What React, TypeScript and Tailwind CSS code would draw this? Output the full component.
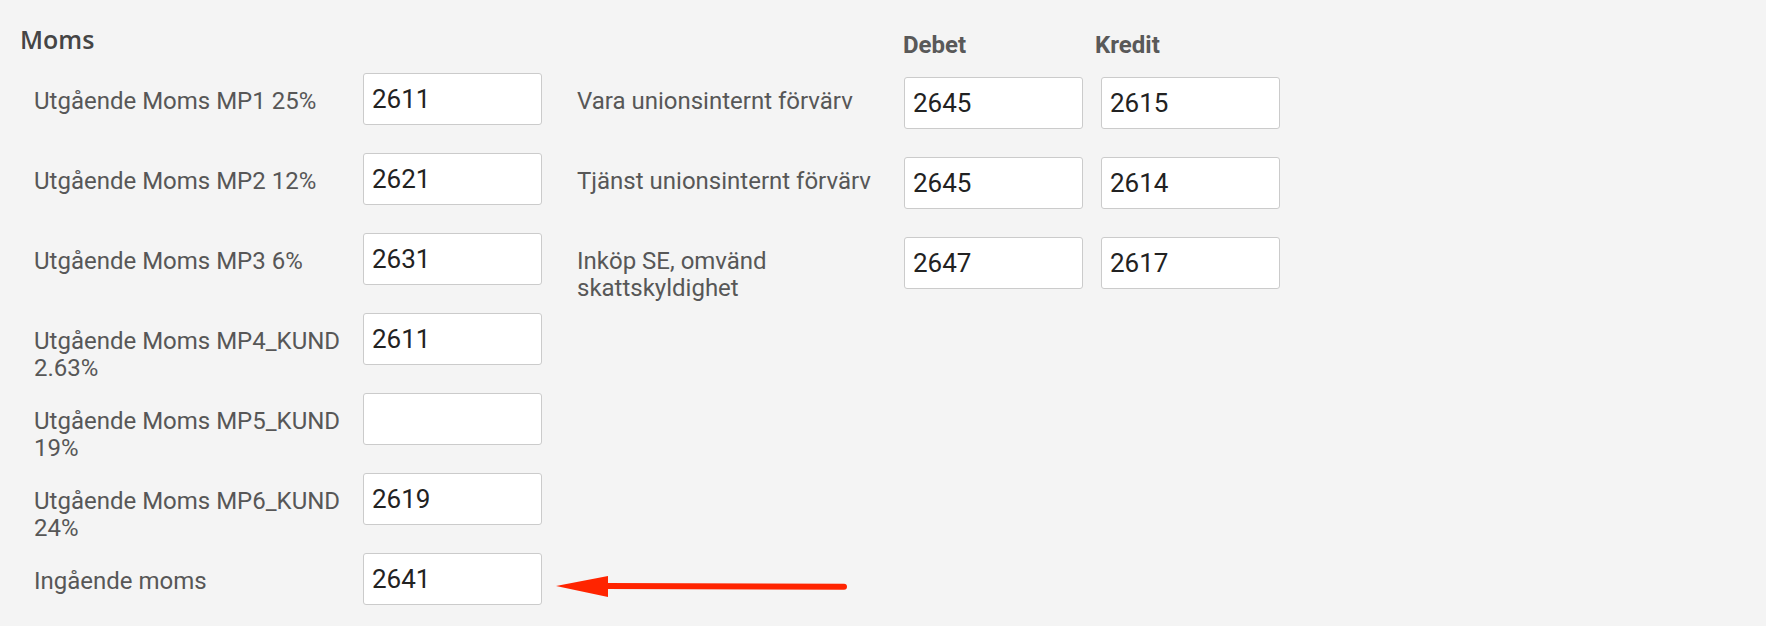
import React from "react";

const leftRows: { label: string; value: string }[] = [
  { label: "Utgående Moms MP1 25%", value: "2611" },
  { label: "Utgående Moms MP2 12%", value: "2621" },
  { label: "Utgående Moms MP3 6%", value: "2631" },
  { label: "Utgående Moms MP4_KUND 2.63%", value: "2611" },
  { label: "Utgående Moms MP5_KUND 19%", value: "" },
  { label: "Utgående Moms MP6_KUND 24%", value: "2619" },
  { label: "Ingående moms", value: "2641" },
];

const rightRows: { label: string; debet: string; kredit: string }[] = [
  { label: "Vara unionsinternt förvärv", debet: "2645", kredit: "2615" },
  { label: "Tjänst unionsinternt förvärv", debet: "2645", kredit: "2614" },
  { label: "Inköp SE, omvänd skattskyldighet", debet: "2647", kredit: "2617" },
];

function Field({ value }: { value: string }) {
  return (
    <input
      type="text"
      defaultValue={value}
      className="w-[179px] h-[52px] shrink-0 rounded-[3px] border border-[#cbcbcb] bg-white pl-[8px] text-[26px] text-[#222222] outline-none"
    />
  );
}

export default function App() {
  return (
    <div
      className="relative w-[1766px] h-[626px] overflow-hidden bg-[#f4f4f4] flex pl-[20px]"
      style={{ fontFamily: "Roboto, 'Liberation Sans', sans-serif" }}
    >
      {/* Left column */}
      <div className="flex flex-col pt-[23px]">
        <h2
          className="text-[25px] leading-[32px] font-semibold text-[#454545]"
          style={{ fontFamily: "'Open Sans', 'Noto Sans', sans-serif" }}
        >
          Moms
        </h2>
        <div className="mt-[18px] ml-[14px] flex flex-col gap-[28px]">
          {leftRows.map((r, i) => (
            <div key={i} className="flex items-start gap-[12px] h-[52px]">
              <div className="w-[317px] pt-[15px] text-[24px] leading-[27px] text-[#575757]">
                {r.label}
              </div>
              <Field value={r.value} />
            </div>
          ))}
        </div>
      </div>

      {/* Right column */}
      <div className="ml-[35px] flex flex-col pt-[32px]">
        <div className="flex h-[27px] text-[24px] leading-[27px] font-bold text-[#595959]">
          <div className="w-[326px]" />
          <div className="w-[192px]">Debet</div>
          <div>Kredit</div>
        </div>
        <div className="mt-[18px] flex flex-col gap-[28px]">
          {rightRows.map((r, i) => (
            <div key={i} className="flex items-start h-[52px]">
              <div className="w-[310px] mr-[17px] pt-[11px] text-[24px] leading-[27px] text-[#575757]">
                {r.label}
              </div>
              <div className="flex gap-[18px]">
                <Field value={r.debet} />
                <Field value={r.kredit} />
              </div>
            </div>
          ))}
        </div>
      </div>

      {/* Annotation arrow */}
      <svg
        className="absolute left-[550px] top-[570px]"
        width="300"
        height="34"
        viewBox="0 0 300 34"
      >
        <line x1="56" y1="16" x2="294" y2="16.8" stroke="#ff2400" strokeWidth="6" strokeLinecap="round" />
        <polygon points="6,16 58,6 58,27" fill="#ff2400" />
      </svg>
    </div>
  );
}
